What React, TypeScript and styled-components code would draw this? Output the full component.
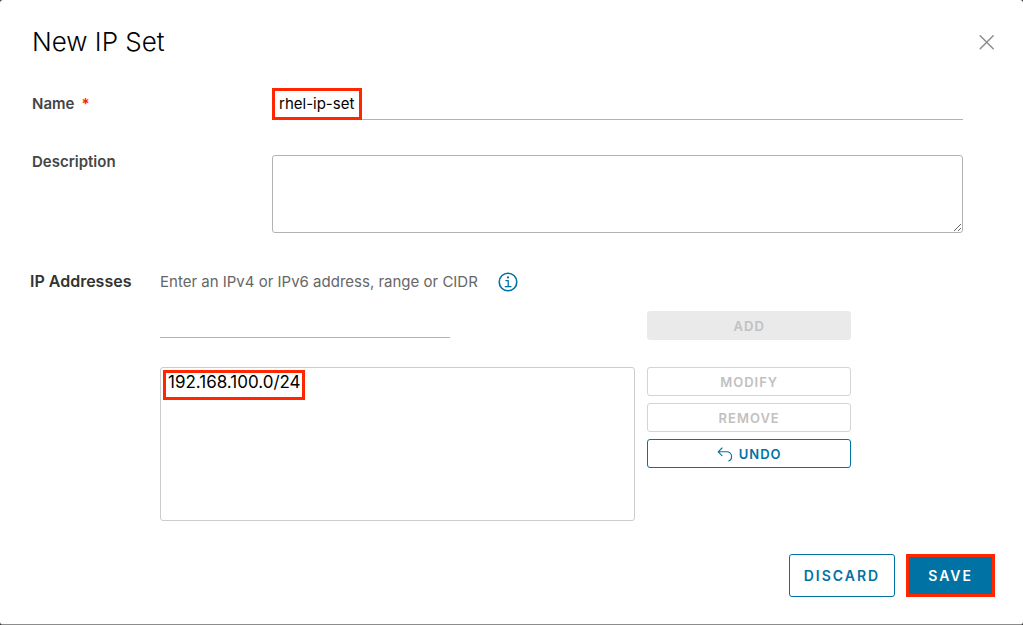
import React from "react";
import styled, { createGlobalStyle, css } from "styled-components";

const blue = "#0072a3";
const red = "#ff2600";

const GlobalStyle = createGlobalStyle`
  *, *::before, *::after { box-sizing: border-box; }
  body {
    margin: 0;
    background: #333;
    font-family: Inter, "Liberation Sans", sans-serif;
    color: #000;
  }
  button, input, textarea, select { font-family: inherit; }
`;

const Dialog = styled.form`
  display: flex;
  flex-direction: column;
  min-height: 100vh;
  padding: 24px 28px 27px 32px;
  background: #fff;
  border-bottom: 1px solid #8c8c8c;
  border-radius: 3px;
`;

const Header = styled.header`
  display: flex;
  align-items: center;
  justify-content: space-between;
  height: 36px;
`;

const Title = styled.h1`
  margin: 0;
  font-size: 26px;
  line-height: 36px;
  font-weight: 300;
`;

const CloseButton = styled.button`
  display: flex;
  padding: 0;
  border: 0;
  background: none;
  color: #8c8c8c;
  cursor: pointer;
`;

const FieldRow = styled.div<{ $gap: number }>`
  display: grid;
  grid-template-columns: 240px minmax(0, 1fr);
  margin-top: ${(p) => p.$gap}px;
  padding-right: 32px;
`;

const Label = styled.label`
  font-size: 15px;
  line-height: 32px;
  font-weight: 600;
  color: #454545;
`;

const TopLabel = styled(Label)`
  line-height: 14px;
`;

const SectionLabel = styled(Label)`
  font-size: 16px;
  color: #333;
`;

const Required = styled.span`
  margin-left: 7px;
  color: #ff1a00;
`;

const Marked = styled.div`
  position: relative;
  display: flex;
`;

const Highlight = styled.span<{ $inset: number; $width: number; $height: number }>`
  position: absolute;
  top: ${(p) => p.$inset}px;
  left: ${(p) => p.$inset}px;
  width: ${(p) => p.$width}px;
  height: ${(p) => p.$height}px;
  border: 3px solid ${red};
  pointer-events: none;
`;

const TextInput = styled.input`
  width: 100%;
  height: 32px;
  padding: 0 7px;
  border: 0;
  border-bottom: 1px solid #b3b3b3;
  background: none;
  font-size: 15px;
  color: #000;
  outline: none;
`;

const TextArea = styled.textarea`
  display: block;
  width: 100%;
  height: 78px;
  padding: 8px;
  border: 1px solid #b3b3b3;
  border-radius: 3px;
  font-size: 15px;
  resize: vertical;
  outline: none;
`;

const AddressGrid = styled.section`
  display: grid;
  grid-template-columns: 118px minmax(0, 7fr) minmax(0, 3fr);
  column-gap: 12px;
  margin: 32px 144px 0 -2px;
`;

const Hint = styled.div`
  display: flex;
  align-items: center;
  gap: 20px;
  grid-column: 2 / -1;
  height: 32px;
  font-size: 15px;
  color: #666;
  white-space: nowrap;
`;

const InfoButton = styled.button`
  display: flex;
  margin: 2px 0 0;
  padding: 0;
  border: 0;
  background: none;
  color: ${blue};
  cursor: pointer;
`;

const AddressEntry = styled.div`
  grid-column: 2;
  width: 61%;
  margin-top: 9px;
`;

const AddressList = styled.select`
  width: 100%;
  height: 154px;
  padding: 4px 7px;
  border: 1px solid #ccc;
  border-radius: 3px;
  background: #fff;
  font-size: 17px;
  line-height: 20px;
  color: #000;
  outline: none;
  overflow: hidden;

  option {
    padding: 0;
    min-height: 20px;
  }
`;

const ListCell = styled(Marked)`
  grid-column: 2;
  margin-top: 27px;
`;

const Actions = styled.div<{ $gap: number }>`
  display: flex;
  flex-direction: column;
  gap: 7px;
  grid-column: 3;
  margin-top: ${(p) => p.$gap}px;
`;

const outline = css`
  border: 1px solid ${blue};
  background: #fff;
  color: ${blue};
`;

const SmallButton = styled.button<{ $filled?: boolean }>`
  display: flex;
  align-items: center;
  justify-content: center;
  gap: 6px;
  height: 29px;
  padding: 0 12px;
  border-radius: 3px;
  font-size: 13px;
  font-weight: 600;
  letter-spacing: 1px;
  ${outline}
  cursor: pointer;

  &:disabled {
    border-color: ${(p) => (p.$filled ? "#eaeaea" : "#d4d4d4")};
    background: ${(p) => (p.$filled ? "#eaeaea" : "#fff")};
    color: #c1c1c1;
    cursor: default;
  }
`;

const Footer = styled.footer`
  display: flex;
  justify-content: flex-end;
  gap: 11px;
  margin-top: auto;
`;

const FooterButton = styled.button<{ $primary?: boolean }>`
  height: 43px;
  padding: 0 ${(p) => (p.$primary ? 19 : 14)}px;
  border-radius: ${(p) => (p.$primary ? 0 : 3)}px;
  font-size: 14px;
  font-weight: 600;
  letter-spacing: 2px;
  ${outline}
  cursor: pointer;
  ${(p) =>
    p.$primary &&
    css`
      border: 3px solid ${red};
      background: ${blue};
      color: #fff;
    `}
`;

const CloseIcon = () => (
  <svg width="16" height="16" viewBox="0 0 16 16" fill="none" stroke="currentColor" strokeWidth="1.5" strokeLinecap="round">
    <path d="M1.2 1.7l13 13M14.2 1.7l-13 13" />
  </svg>
);

const InfoIcon = () => (
  <svg width="20" height="20" viewBox="0 0 20 20" fill="none" stroke="currentColor">
    <circle cx="10" cy="10" r="8.8" strokeWidth="1.6" />
    <circle cx="10" cy="5.4" r="1.1" fill="currentColor" stroke="none" />
    <path d="M7.9 8.6h2.3v6M7.3 14.7h5.6" strokeWidth="1.3" strokeLinecap="round" />
  </svg>
);

const UndoIcon = () => (
  <svg width="16" height="16" viewBox="0 0 16 16" fill="none" stroke="currentColor" strokeWidth="1.1" strokeLinecap="round" strokeLinejoin="round">
    <path d="M5 2L1.2 5.8L5 9.6M1.2 5.8H9.6c3 0 5 2 5 4.6c0 2.4-1.2 4-2.8 4.6" />
  </svg>
);

export default function App() {
  return (
    <>
      <GlobalStyle />
      <Dialog role="dialog" aria-labelledby="title" onSubmit={(e) => e.preventDefault()}>
        <Header>
          <Title id="title">New IP Set</Title>
          <CloseButton type="button" aria-label="Close">
            <CloseIcon />
          </CloseButton>
        </Header>

        <FieldRow $gap={28}>
          <Label htmlFor="name">
            Name<Required>*</Required>
          </Label>
          <Marked>
            <TextInput id="name" defaultValue="rhel-ip-set" />
            <Highlight $inset={0} $width={90} $height={32} />
          </Marked>
        </FieldRow>

        <FieldRow $gap={35}>
          <TopLabel htmlFor="description">Description</TopLabel>
          <TextArea id="description" />
        </FieldRow>

        <AddressGrid>
          <SectionLabel htmlFor="address">IP Addresses</SectionLabel>
          <Hint>
            Enter an IPv4 or IPv6 address, range or CIDR
            <InfoButton type="button" aria-label="Address formats">
              <InfoIcon />
            </InfoButton>
          </Hint>
          <AddressEntry>
            <TextInput id="address" />
          </AddressEntry>
          <Actions $gap={14}>
            <SmallButton type="button" $filled disabled>
              ADD
            </SmallButton>
          </Actions>
          <ListCell>
            <AddressList size={7} aria-label="Added addresses">
              <option>192.168.100.0/24</option>
            </AddressList>
            <Highlight $inset={3} $width={142} $height={30} />
          </ListCell>
          <Actions $gap={27}>
            <SmallButton type="button" disabled>
              MODIFY
            </SmallButton>
            <SmallButton type="button" disabled>
              REMOVE
            </SmallButton>
            <SmallButton type="button">
              <UndoIcon />
              UNDO
            </SmallButton>
          </Actions>
        </AddressGrid>

        <Footer>
          <FooterButton type="button">DISCARD</FooterButton>
          <FooterButton type="submit" $primary>
            SAVE
          </FooterButton>
        </Footer>
      </Dialog>
    </>
  );
}
